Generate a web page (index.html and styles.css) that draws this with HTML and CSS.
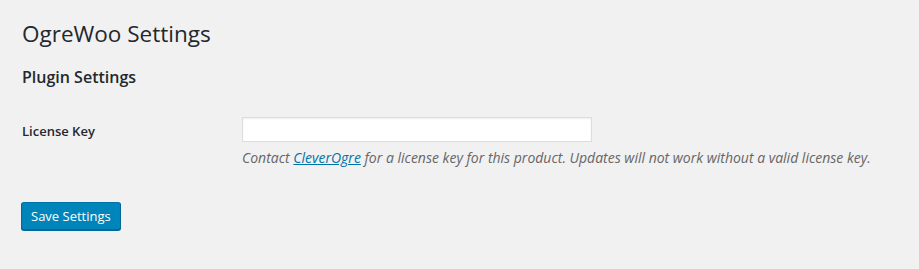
FILE: index.html
```html
<!DOCTYPE html>
<html lang="en">
<head>
    <meta charset="UTF-8">
    <title>OgreWoo Settings</title>
    <link rel="stylesheet" href="styles.css">
</head>
<body>

<div class="wrap">
    <h1>OgreWoo Settings</h1>
    <form>
        <h2>Plugin Settings</h2>
        <table class="form-table">
            <tr>
                <th><label for="license-key">License Key</label></th>
                <td>
                    <input type="text" id="license-key" class="regular-text">
                    <p class="description">Contact <a href="#">CleverOgre</a> for a license key for this product. Updates will not work without a valid license key.</p>
                </td>
            </tr>
        </table>
        <p class="submit">
            <button type="button" class="button-primary">Save Settings</button>
        </p>
    </form>
</div>

</body>
</html>
```

FILE: styles.css
```css
* {
    box-sizing: border-box;
}

body {
    margin: 0;
    background: #f1f1f1;
    color: #444;
    font-family: "Open Sans", sans-serif;
    font-size: 13px;
    line-height: 1.4em;
}

.wrap {
    margin: 10px 20px 0 22px;
}

h1 {
    font-size: 22.5px;
    font-weight: 400;
    line-height: 29px;
    margin: 0;
    padding: 9px 0 4px;
    color: #23282d;
}

h2 {
    font-size: 16px;
    font-weight: 600;
    color: #23282d;
    margin: 16px 0;
}

.form-table {
    border-collapse: collapse;
    margin-top: 10px;
    width: 100%;
}

.form-table th {
    width: 220px;
    padding: 21px 10px 20px 0;
    text-align: left;
    vertical-align: top;
    font-size: 13px;
    font-weight: 600;
    color: #23282d;
    line-height: 1.3;
}

.form-table td {
    padding: 15px 10px;
    vertical-align: middle;
}

.regular-text {
    width: 350px;
    height: 25px;
    margin: 0 0 0 -10px;
    border: 1px solid #ddd;
    background: #fff;
    box-shadow: inset 0 1px 2px rgba(0, 0, 0, 0.07);
    font-size: 14px;
}

.description {
    margin: 7px 0 0 -10px;
    font-style: italic;
    color: #666;
    font-size: 14px;
}

.description a {
    color: #0073aa;
}

.submit {
    margin: 0 0 0 -1px;
    padding: 1.5em 0;
}

.button-primary {
    height: 28px;
    padding: 0 9px 1px;
    background: #0085ba;
    border: 1px solid;
    border-color: #0073aa #006799 #006799;
    border-radius: 3px;
    box-shadow: 0 1px 0 #006799;
    color: #fff;
    font-family: inherit;
    font-size: 13px;
    line-height: 26px;
    cursor: pointer;
}
```
